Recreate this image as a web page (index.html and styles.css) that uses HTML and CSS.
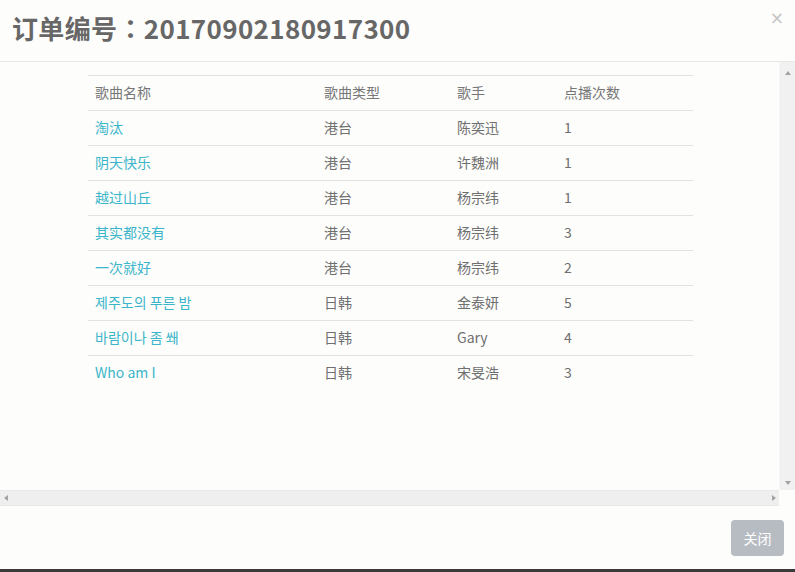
FILE: index.html
```html
<!DOCTYPE html>
<html>
<head>
<meta charset="utf-8">
<link rel="stylesheet" href="styles.css">
</head>
<body>
<div class="modal">
  <div class="header">
    <h4 class="title">订单编号：20170902180917300</h4>
    <span class="close">×</span>
  </div>
  <div class="body">
    <div class="content">
      <table class="songs">
        <thead>
          <tr><th class="c1">歌曲名称</th><th class="c2">歌曲类型</th><th class="c3">歌手</th><th class="c4">点播次数</th></tr>
        </thead>
        <tbody>
          <tr><td><a>淘汰</a></td><td>港台</td><td>陈奕迅</td><td>1</td></tr>
          <tr><td><a>阴天快乐</a></td><td>港台</td><td>许魏洲</td><td>1</td></tr>
          <tr><td><a>越过山丘</a></td><td>港台</td><td>杨宗纬</td><td>1</td></tr>
          <tr><td><a>其实都没有</a></td><td>港台</td><td>杨宗纬</td><td>3</td></tr>
          <tr><td><a>一次就好</a></td><td>港台</td><td>杨宗纬</td><td>2</td></tr>
          <tr><td><a>제주도의 푸른 밤</a></td><td>日韩</td><td>金泰妍</td><td>5</td></tr>
          <tr><td><a>바람이나 좀 쐐</a></td><td>日韩</td><td>Gary</td><td>4</td></tr>
          <tr class="last"><td><a>Who am I</a></td><td>日韩</td><td>宋旻浩</td><td>3</td></tr>
        </tbody>
      </table>
    </div>
    <div class="vbar">
      <span class="arrow up"></span>
      <span class="arrow down"></span>
    </div>
    <div class="hbar">
      <span class="arrow left"></span>
      <span class="arrow right"></span>
    </div>
    <div class="corner"></div>
  </div>
  <div class="footer">
    <button class="btn">关闭</button>
  </div>
</div>
</body>
</html>
```
FILE: styles.css
```css
html, body {
  margin: 0;
  padding: 0;
  background: #fdfdfc;
}
body {
  font-family: "Noto Sans CJK SC", "Noto Sans", sans-serif;
  width: 795px;
  height: 572px;
  overflow: hidden;
}
.modal {
  display: flex;
  flex-direction: column;
  height: 572px;
  border-bottom: 3px solid #3a3a3a;
  box-sizing: border-box;
}
.header {
  height: 61px;
  border-bottom: 1px solid #e8e8e8;
  display: flex;
  align-items: flex-start;
  justify-content: space-between;
  padding: 0 12px;
  flex-shrink: 0;
}
.title {
  margin: 15px 0 0;
  font-family: "Noto Sans CJK TC", "Noto Sans CJK SC", sans-serif;
  font-size: 26px;
  font-weight: 700;
  color: #676767;
  letter-spacing: 0.35px;
  line-height: 26px;
}
.close {
  font-family: "DejaVu Sans", sans-serif;
  font-size: 17px;
  color: #c4c4c4;
  margin-top: 8px;
  margin-right: -1px;
}
.body {
  flex: 1;
  display: grid;
  grid-template-columns: 1fr 16px;
  grid-template-rows: 1fr 16px;
  min-height: 0;
}
.content {
  padding: 13px 0 0 88px;
  background: #fdfdfc;
}
.songs {
  border-collapse: collapse;
  width: 605px;
  font-size: 14px;
  color: #6f6f6f;
}
.songs th, .songs td {
  text-align: left;
  font-weight: 400;
  padding: 0 7px 2px;
  height: 32px;
  border-top: 1px solid #e2e2e2;
  vertical-align: middle;
  line-height: 20px;
}
.songs th { color: #777; }
.c1 { width: 215px; }
.c2 { width: 119px; }
.c3 { width: 93px; }
.songs a {
  color: #3bb5c9;
  text-decoration: none;
}
.vbar {
  background: #f1f1f1;
  border-left: 1px solid #f7f7f7;
  display: flex;
  flex-direction: column;
  justify-content: space-between;
  align-items: center;
  padding: 9px 0 5px;
}
.hbar {
  background: #efefef;
  border-top: 1px solid #e9e9e9;
  border-bottom: 1px solid #e9e9e9;
  display: flex;
  justify-content: space-between;
  align-items: center;
  padding: 0 3px 0 4px;
}
.corner { background: #fdfdfc; }
.arrow {
  width: 0;
  height: 0;
  border: 3px solid transparent;
}
.arrow.up { border-bottom: 4px solid #a3a3a3; border-top: 0; }
.arrow.down { border-top: 4px solid #a3a3a3; border-bottom: 0; }
.arrow.left { border-right: 4px solid #a3a3a3; border-left: 0; }
.arrow.right { border-left: 4px solid #a3a3a3; border-right: 0; }
.footer {
  height: 63px;
  display: flex;
  justify-content: flex-end;
  align-items: flex-start;
  padding: 14px 11px 0 0;
  box-sizing: border-box;
  flex-shrink: 0;
}
.btn {
  width: 53px;
  height: 36px;
  border: none;
  border-radius: 4px;
  background: #b7bcc3;
  color: #fff;
  font-family: "Noto Sans CJK SC", sans-serif;
  font-size: 14px;
  padding: 0;
}
```
